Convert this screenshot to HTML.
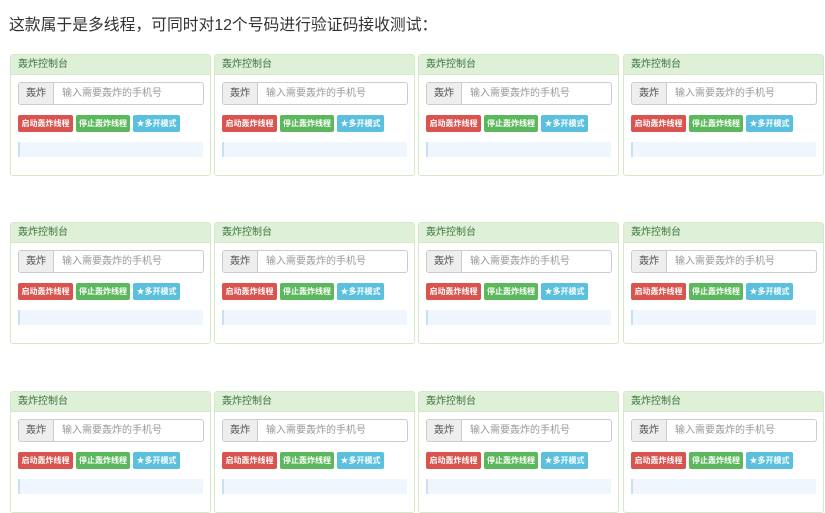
<!DOCTYPE html>
<html><head><meta charset="utf-8"><style>
body{margin:0;width:825px;height:466px;overflow:hidden;background:#fff;font-family:"Liberation Sans","Noto Sans CJK SC",sans-serif;position:relative}
.t{position:absolute;left:9px;top:12px;font-size:15.8px;color:#333;white-space:nowrap}
.p{position:absolute;width:199px;height:120px;border:1px solid #d6e9c6;border-radius:3px;background:#fff;box-sizing:content-box}
.h{height:19px;background:#dff0d8;border-bottom:1px solid #d6e9c6;color:#3c763d;font-size:10px;line-height:19px;padding-left:7px}
.ig{position:absolute;left:7px;top:27px;width:184px;height:21px;border:1px solid #ccc;border-radius:3px;overflow:hidden}
.ad{position:absolute;left:0;top:0;width:34px;height:21px;background:#eee;border-right:1px solid #ccc;font-size:10px;line-height:21px;text-align:center;color:#555}
.ph{position:absolute;left:43px;top:0;font-size:10px;line-height:21px;color:#999}
.b{position:absolute;top:60px;height:17px;border-radius:2px;color:#fff;font-size:8px;line-height:17px;text-align:center;font-weight:bold}
.r{left:7px;width:55px;background:#d9534f}
.g{left:65px;width:54px;background:#5cb85c}
.c{left:122px;width:47px;background:#5bc0de}
.pr{position:absolute;left:7px;top:87px;width:183px;height:15px;background:#eff6fd;border-left:2px solid #c9dff3}
</style></head><body>
<div class="t">这款属于是多线程，可同时对12个号码进行验证码接收测试：</div>

<div class="p" style="left:10px;top:54px"><div class="h">轰炸控制台</div><div class="ig"><div class="ad">轰炸</div><div class="ph">输入需要轰炸的手机号</div></div><div class="b r">启动轰炸线程</div><div class="b g">停止轰炸线程</div><div class="b c">★多开模式</div><div class="pr"></div></div>
<div class="p" style="left:214px;top:54px"><div class="h">轰炸控制台</div><div class="ig"><div class="ad">轰炸</div><div class="ph">输入需要轰炸的手机号</div></div><div class="b r">启动轰炸线程</div><div class="b g">停止轰炸线程</div><div class="b c">★多开模式</div><div class="pr"></div></div>
<div class="p" style="left:418px;top:54px"><div class="h">轰炸控制台</div><div class="ig"><div class="ad">轰炸</div><div class="ph">输入需要轰炸的手机号</div></div><div class="b r">启动轰炸线程</div><div class="b g">停止轰炸线程</div><div class="b c">★多开模式</div><div class="pr"></div></div>
<div class="p" style="left:623px;top:54px"><div class="h">轰炸控制台</div><div class="ig"><div class="ad">轰炸</div><div class="ph">输入需要轰炸的手机号</div></div><div class="b r">启动轰炸线程</div><div class="b g">停止轰炸线程</div><div class="b c">★多开模式</div><div class="pr"></div></div>

<div class="p" style="left:10px;top:222px"><div class="h">轰炸控制台</div><div class="ig"><div class="ad">轰炸</div><div class="ph">输入需要轰炸的手机号</div></div><div class="b r">启动轰炸线程</div><div class="b g">停止轰炸线程</div><div class="b c">★多开模式</div><div class="pr"></div></div>
<div class="p" style="left:214px;top:222px"><div class="h">轰炸控制台</div><div class="ig"><div class="ad">轰炸</div><div class="ph">输入需要轰炸的手机号</div></div><div class="b r">启动轰炸线程</div><div class="b g">停止轰炸线程</div><div class="b c">★多开模式</div><div class="pr"></div></div>
<div class="p" style="left:418px;top:222px"><div class="h">轰炸控制台</div><div class="ig"><div class="ad">轰炸</div><div class="ph">输入需要轰炸的手机号</div></div><div class="b r">启动轰炸线程</div><div class="b g">停止轰炸线程</div><div class="b c">★多开模式</div><div class="pr"></div></div>
<div class="p" style="left:623px;top:222px"><div class="h">轰炸控制台</div><div class="ig"><div class="ad">轰炸</div><div class="ph">输入需要轰炸的手机号</div></div><div class="b r">启动轰炸线程</div><div class="b g">停止轰炸线程</div><div class="b c">★多开模式</div><div class="pr"></div></div>

<div class="p" style="left:10px;top:391px"><div class="h">轰炸控制台</div><div class="ig"><div class="ad">轰炸</div><div class="ph">输入需要轰炸的手机号</div></div><div class="b r">启动轰炸线程</div><div class="b g">停止轰炸线程</div><div class="b c">★多开模式</div><div class="pr"></div></div>
<div class="p" style="left:214px;top:391px"><div class="h">轰炸控制台</div><div class="ig"><div class="ad">轰炸</div><div class="ph">输入需要轰炸的手机号</div></div><div class="b r">启动轰炸线程</div><div class="b g">停止轰炸线程</div><div class="b c">★多开模式</div><div class="pr"></div></div>
<div class="p" style="left:418px;top:391px"><div class="h">轰炸控制台</div><div class="ig"><div class="ad">轰炸</div><div class="ph">输入需要轰炸的手机号</div></div><div class="b r">启动轰炸线程</div><div class="b g">停止轰炸线程</div><div class="b c">★多开模式</div><div class="pr"></div></div>
<div class="p" style="left:623px;top:391px"><div class="h">轰炸控制台</div><div class="ig"><div class="ad">轰炸</div><div class="ph">输入需要轰炸的手机号</div></div><div class="b r">启动轰炸线程</div><div class="b g">停止轰炸线程</div><div class="b c">★多开模式</div><div class="pr"></div></div>
</body></html>
